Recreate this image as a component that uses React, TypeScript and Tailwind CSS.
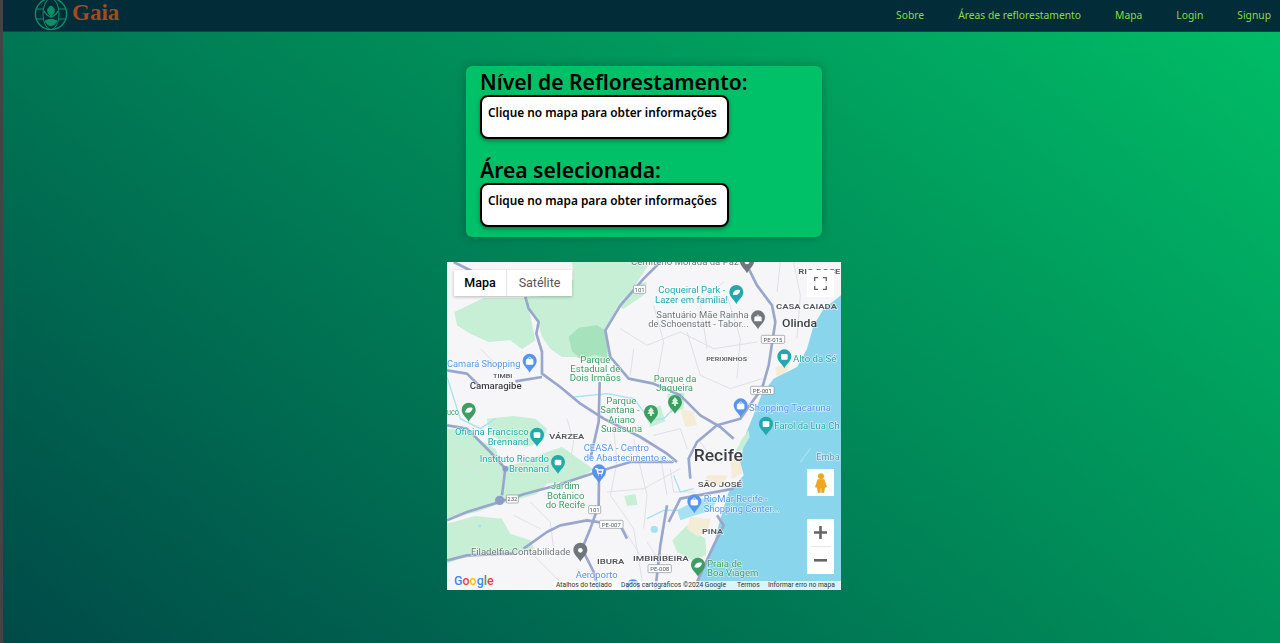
import React from "react";

const UI = "'Noto Sans','Open Sans',sans-serif";

/* The map drawing uses a 3x coordinate space: viewBox 1182 x 984 rendered at 394 x 328 */
const greens: [string, string][] = [
  ["M375 0 L610 0 L565 70 L520 120 L480 190 L470 205 L490 290 L440 300 L385 285 L345 285 L310 260 L285 225 L272 180 L245 140 L235 105 L330 100 L380 50 Z", "#c7efd6"],
  ["M22 150 L110 108 L235 108 L250 160 L265 235 L225 262 L190 235 L125 240 L70 215 L30 190 Z", "#c7efd6"],
  ["M365 225 L395 197 L450 190 L475 205 L482 270 L478 288 L445 278 L400 290 L375 268 Z", "#a6e2bb"],
  ["M0 500 L60 500 L100 535 L145 560 L170 615 L230 600 L300 570 L345 555 L395 590 L440 622 L385 655 L300 665 L270 695 L215 712 L150 728 L90 750 L45 760 L0 770 Z", "#c7efd6"],
  ["M120 470 L200 462 L265 470 L300 500 L290 535 L240 555 L170 540 L125 515 Z", "#c7efd6"],
  ["M0 785 L85 762 L165 770 L190 815 L250 835 L262 860 L205 875 L100 880 L40 890 L0 905 Z", "#c7efd6"],
  ["M590 450 L640 430 L655 478 L610 495 Z", "#c7efd6"],
  ["M660 395 L712 392 L710 440 L672 452 Z", "#c7efd6"],
  ["M532 702 L565 696 L572 728 L540 732 Z", "#c7efd6"],
  ["M676 835 L720 790 L775 830 L778 880 L735 895 L690 870 Z", "#c7efd6"],
  ["M510 135 L560 70 L600 60 L590 100 L530 140 Z", "#c7efd6"],
];

const beige: string[] = [
  "M700 440 L740 450 L750 490 L715 495 Z",
  "M850 590 L882 590 L885 635 L855 650 Z",
  "M985 315 L1030 305 L1010 350 L990 345 Z",
  "M730 765 L790 770 L785 800 L755 825 L720 800 Z",
  "M780 640 L840 640 L830 670 L775 665 Z",
];

const water =
  "M1182 100 L1130 140 L1100 190 L1080 260 L1050 315 L980 350 L945 395 L915 470 L895 520 L880 600 L890 640 L845 690 L820 770 L800 850 L770 920 L740 984 L1182 984 Z";

const major = [
  "M235 105 L245 140 L275 180 L268 215 L285 270 L285 335 L340 375 L400 425 L470 470 L580 525 L660 575 L690 600",
  "M0 325 L60 335 L100 375",
  "M205 358 L285 345",
  "M640 0 L590 50 L520 130 L475 205 L490 285 L545 350 L620 365 L700 400 L760 460 L820 495 L860 530",
  "M900 10 L930 70 L975 130 L985 180 L965 310 L945 380 L915 420 L880 470 L810 490 L750 540 L725 590 L730 650",
  "M0 775 L60 750 L150 722 L235 695 L330 670 L450 630 L550 600 L680 600",
  "M456 640 L455 730 L430 800 L405 860 L440 930 L455 984",
  "M230 860 L300 810 L340 790 L420 775 L520 790 L540 830",
  "M60 500 L130 570 L175 620 L165 700",
  "M0 895 L60 880 L200 875",
  "M660 730 L640 850 L625 984",
  "M860 680 L700 710 L665 780",
  "M810 760 L830 790 L800 850 L750 960",
  "M458 360 L455 480 L430 590",
  "M20 0 L80 30",
  "M0 490 L60 500",
];

const minor = [
  "M520 200 L600 250 L700 210 L800 260 L930 240",
  "M560 260 L550 340",
  "M620 130 L650 240 L630 350",
  "M720 210 L760 340 L850 380 L945 350",
  "M780 260 L760 120 L830 60",
  "M840 100 L880 230 L870 350",
  "M500 500 L510 600 L490 700 L560 800 L590 984",
  "M560 530 L600 700 L590 800",
  "M640 580 L660 700",
  "M700 620 L590 680 L480 690",
  "M360 470 L380 540 L360 650",
  "M200 760 L280 800",
  "M530 800 L580 880 L700 880",
  "M620 520 L700 500 L720 560",
  "M30 590 L110 640",
  "M250 720 L310 780 L320 860",
  "M260 880 L340 960 L400 984",
  "M1040 0 L1060 100 L1050 230",
  "M1000 0 L990 90",
  "M600 840 L640 900",
  "M760 540 L800 600 L840 560",
  "M670 620 L680 690 L745 690",
  "M100 260 L170 330",
];

const rivers = [
  "M380 405 L480 395 L560 410 L610 475 L650 470 L680 440",
  "M0 345 L40 470 L100 500 L145 470",
  "M680 640 L700 690 L740 680",
  "M600 770 L650 745 L700 745",
  "M1090 560 L1060 600",
];

type Lbl = [number, number, number, string, string, number?, number?];

const teal = "#21a9ac",
  blue = "#5795ec",
  green = "#3d9e63",
  gray = "#70767c",
  dark = "#3b3e42",
  muted = "#55595e";

const labels: Lbl[] = [
  [552, 875, 8, "Cemitério Morada da Paz", gray],
  [1054, 1180, 36, "RIO DOCE", muted, 20, 600],
  [634, 835, 94, "Coqueiral Park -", teal],
  [624, 843, 122, "Lazer em família!", teal],
  [628, 905, 168, "Santuário Mãe Rainha", gray],
  [604, 905, 196, "de Schoenstatt - Tabor...", gray],
  [987, 1170, 140, "CASA CAIADA", muted, 20, 600],
  [1005, 1110, 196, "Olinda", dark, 34, 500],
  [778, 900, 298, "PERIXINHOS", muted, 17, 600],
  [1038, 1168, 300, "Alto da Sé", teal],
  [0, 220, 315, "Camará Shopping", blue],
  [138, 196, 349, "TIMBI", muted, 16, 600],
  [68, 224, 382, "Camaragibe", dark, 26, 500],
  [400, 490, 302, "Parque", green],
  [370, 520, 330, "Estadual de", green],
  [368, 522, 358, "Dois Irmãos", green],
  [620, 748, 359, "Parque da", green],
  [628, 738, 388, "Jaqueira", green],
  [478, 568, 425, "Parque", green],
  [460, 578, 453, "Santana -", green],
  [484, 564, 483, "Ariano", green],
  [462, 585, 511, "Suassuna", green],
  [0, 36, 460, "uco", green],
  [24, 245, 519, "Oficina Francisco", teal],
  [122, 244, 548, "Brennand", teal],
  [307, 412, 532, "VÁRZEA", muted, 20, 600],
  [98, 306, 601, "Instituto Ricardo", teal],
  [186, 306, 630, "Brennand", teal],
  [410, 606, 567, "CEASA - Centro", blue],
  [410, 680, 596, "de Abastecimento e...", blue],
  [312, 398, 682, "Jardim", green],
  [300, 412, 710, "Botânico", green],
  [296, 414, 739, "do Recife", green],
  [740, 888, 598, "Recife", dark, 48, 500],
  [752, 885, 674, "SÃO JOSÉ", muted, 20, 600],
  [770, 962, 720, "RioMar Recife -", blue],
  [770, 998, 749, "Shopping Center...", blue],
  [765, 828, 815, "PINA", muted, 20, 600],
  [558, 725, 897, "IMBIRIBEIRA", muted, 20, 600],
  [450, 532, 907, "IBURA", muted, 20, 600],
  [780, 885, 914, "Praia de", green],
  [780, 934, 943, "Boa Viagem", green],
  [72, 370, 880, "Filadelfia Contabilidade", gray],
  [386, 512, 948, "Aeroporto", blue],
  [906, 1152, 446, "Shopping Tacaruna", blue],
  [982, 1178, 500, "Farol da Lua Ch", teal],
  [1108, 1178, 593, "Emba", "#5f9db2"],
];

type PinKind = "bag" | "box" | "tree" | "dot" | "church" | "cart" | "leaf";

const pins: [number, number, string, PinKind][] = [
  [900, 0, gray, "dot"],
  [868, 92, teal, "leaf"],
  [933, 168, gray, "church"],
  [1012, 285, teal, "box"],
  [248, 298, blue, "bag"],
  [65, 445, green, "leaf"],
  [270, 520, teal, "box"],
  [333, 602, teal, "box"],
  [456, 630, blue, "cart"],
  [612, 452, green, "tree"],
  [684, 422, green, "tree"],
  [881, 432, blue, "bag"],
  [957, 487, teal, "box"],
  [742, 720, blue, "bag"],
  [753, 910, green, "leaf"],
  [400, 865, gray, "dot"],
  [558, 975, blue, "bag"],
];

const shields: [number, number, string][] = [
  [578, 82, "101"],
  [978, 232, "PE-015"],
  [946, 385, "PE-001"],
  [196, 711, "232"],
  [443, 743, "101"],
  [493, 787, "PE-007"],
  [638, 920, "PE-008"],
];

function PinGlyph({ k }: { k: PinKind }) {
  if (k === "tree") return <path d="M0 -17 L9 -5 H5 L11 4 H3 V10 H-3 V4 H-11 L-5 -5 H-9 Z" fill="#d9f2e0" />;
  if (k === "dot") return <circle r="7" fill="#fff" />;
  if (k === "bag")
    return (
      <g fill="none" stroke="#fff" strokeWidth="2.5">
        <rect x="-10" y="-6" width="20" height="15" rx="2" fill="#fff" />
        <path d="M-5 -6 C-5 -14 5 -14 5 -6" />
      </g>
    );
  if (k === "cart") return <path d="M-12 -10 H-6 L-3 4 H9 L12 -6 H-5 M-2 9 h2 M6 9 h2" fill="none" stroke="#fff" strokeWidth="4" />;
  if (k === "church") return <path d="M-11 10 V-2 L-5 -7 L-3 -2 L0 -13 L3 -2 L5 -7 L11 -2 V10 Z" fill="#fff" />;
  if (k === "leaf") return <path d="M-11 6 C-9 -7 2 -11 12 -7 C10 5 1 10 -11 6 Z" fill="#fff" />;
  return <rect x="-10" y="-9" width="20" height="17" rx="3" fill="#fff" />;
}

function Pin({ x, y, c, k }: { x: number; y: number; c: string; k: PinKind }) {
  return (
    <g transform={`translate(${x} ${y})`}>
      <path d="M0 34 C-5 22 -21 13 -21 -2 A21 21 0 1 1 21 -2 C21 13 5 22 0 34 Z" fill={c} />
      <PinGlyph k={k} />
    </g>
  );
}

function GoogleWord() {
  const l: [string, string][] = [
    ["G", "#4285f4"],
    ["o", "#ea4335"],
    ["o", "#fbbc05"],
    ["g", "#4285f4"],
    ["l", "#34a853"],
    ["e", "#ea4335"],
  ];
  return (
    <span className="absolute left-[7px] bottom-[1px] text-[12.5px] leading-[16px] font-medium [text-shadow:0_0_2px_#fff]">
      {l.map(([t, c], i) => (
        <span key={i} style={{ color: c }}>
          {t}
        </span>
      ))}
    </span>
  );
}

function MapView() {
  return (
    <div className="relative w-[394px] h-[328px] overflow-hidden bg-[#f6f6f8] [font-family:Roboto,sans-serif]">
      <svg width="394" height="328" viewBox="0 0 1182 984" className="block blur-[0.3px]">
        <rect width="1182" height="984" fill="#f6f6f8" />
        {greens.map(([d, c], i) => (
          <path key={i} d={d} fill={c} />
        ))}
        {beige.map((d, i) => (
          <path key={i} d={d} fill="#f5ecd8" />
        ))}
        {minor.map((d, i) => (
          <path key={i} d={d} fill="none" stroke="#dfe1e8" strokeWidth="3" />
        ))}
        <path d={water} fill="#88d5ec" />
        <path d="M690 745 L755 712 L812 705 L795 745 L745 760 L700 775 Z" fill="#a6e2f1" />
        <circle cx="622" cy="802" r="11" fill="#a6e2f1" />
        <circle cx="98" cy="792" r="5" fill="#a6e2f1" />
        <path d="M905 505 L885 530 L865 570 L885 565 L908 525 Z" fill="#c7efd6" />
        {rivers.map((d, i) => (
          <path key={i} d={d} fill="none" stroke="#a6e2f1" strokeWidth="4" />
        ))}
        {major.map((d, i) => (
          <path key={i} d={d} fill="none" stroke="#99a7cc" strokeWidth="8" strokeLinejoin="round" />
        ))}
        <circle cx="158" cy="715" r="14" fill="#8f9cc6" />
        <circle cx="175" cy="620" r="9" fill="#8f9cc6" />
        {labels.map(([x1, x2, y, t, c, s, w], i) => (
          <text
            key={i}
            x={x1}
            y={y}
            fill={c}
            fontSize={s ?? 29}
            fontWeight={w ?? 400}
            textLength={x2 - x1}
            lengthAdjust="spacingAndGlyphs"
            stroke="#ffffff"
            strokeWidth="4"
            strokeOpacity="0.6"
            paintOrder="stroke"
          >
            {t}
          </text>
        ))}
        {pins.map(([x, y, c, k], i) => (
          <Pin key={i} x={x} y={y} c={c} k={k} />
        ))}
        {shields.map(([x, y, t], i) => {
          const w = t.length > 3 ? 70 : 36;
          return (
            <g key={i}>
              <rect x={x - w / 2} y={y - 12} width={w} height={24} rx="3" fill="#fff" stroke="#8a8f96" strokeWidth="2" />
              <text x={x} y={y + 7} fontSize="18" fill="#55595f" textAnchor="middle">
                {t}
              </text>
            </g>
          );
        })}
      </svg>

      <div className="absolute left-[7px] top-[8px] flex h-[26px] bg-white shadow-[0_1px_3px_rgba(0,0,0,0.25)] text-[12.5px]">
        <div className="w-[53px] flex items-center justify-center text-black font-medium border-r border-[#e6e6e6]">Mapa</div>
        <div className="w-[65px] flex items-center justify-center text-[#565656]">Satélite</div>
      </div>

      <div className="absolute left-[360px] top-[8px] w-[27px] h-[27px] bg-white flex items-center justify-center">
        <svg width="13" height="13" viewBox="0 0 13 13" fill="none" stroke="#666" strokeWidth="1.3">
          <path d="M0.7 4V0.7H4M9 0.7H12.3V4M12.3 9V12.3H9M4 12.3H0.7V9" />
        </svg>
      </div>

      <div className="absolute left-[360px] top-[207px] w-[27px] h-[27px] bg-white flex items-center justify-center">
        <svg width="12" height="20" viewBox="0 0 12 20">
          <circle cx="6" cy="3.2" r="3" fill="#f2a71b" />
          <path d="M2.8 6.5 H9.2 L11.6 14 L9.6 14.5 L9 19.5 H6.6 V15 H5.4 V19.5 H3 L2.4 14.5 L0.4 14 Z" fill="#f2a71b" stroke="#c98a12" strokeWidth="0.4" />
        </svg>
      </div>

      <div className="absolute left-[360px] top-[257px] w-[27px] h-[55px] bg-white flex flex-col items-center">
        <div className="h-[27px] w-full flex items-center justify-center">
          <svg width="13" height="13" viewBox="0 0 13 13" fill="#666">
            <path d="M5.2 0H7.8V5.2H13V7.8H7.8V13H5.2V7.8H0V5.2H5.2Z" />
          </svg>
        </div>
        <div className="w-[20px] h-px bg-[#e6e6e6]" />
        <div className="h-[27px] w-full flex items-center justify-center">
          <svg width="13" height="3" viewBox="0 0 13 3" fill="#666">
            <rect width="13" height="2.6" />
          </svg>
        </div>
      </div>

      <GoogleWord />

      <div className="absolute right-0 bottom-0 h-[9px] flex items-center text-[6.7px] leading-[9px] text-[#333] bg-white/70 whitespace-nowrap">
        <span className="pl-[3px] w-[68px]">Atalhos do teclado</span>
        <span className="w-[116px]">Dados cartográficos ©2024 Google</span>
        <span className="w-[31px]">Termos</span>
        <span className="w-[73px]">Informar erro no mapa</span>
      </div>
    </div>
  );
}

function Logo() {
  const c = "#0b8f68";
  return (
    <svg width="34" height="34" viewBox="0 0 34 34" fill="none" stroke={c} strokeWidth="1" className="-mt-[4px] shrink-0">
      <circle cx="17" cy="17" r="15.6" strokeWidth="1.4" />
      <ellipse cx="17" cy="17" rx="8" ry="15.6" />
      <path d="M2 12H10M24 12H32M2 22H10M24 22H32" />
      <path d="M17 9 C13 11 12 15 17 19 C22 15 21 11 17 9 Z" fill={c} />
      <path d="M10 14 C12 18 14 19 17 20 C20 19 22 18 24 14" strokeWidth="1.5" />
      <path d="M11 24 C13 28 15 28 17 29 C19 28 21 28 23 24 C20 22 14 22 11 24 Z" fill={c} />
    </svg>
  );
}

function InfoBlock({ title }: { title: string }) {
  return (
    <div>
      <h2 className="text-[21.1px] leading-[26px] font-semibold text-black whitespace-nowrap">{title}</h2>
      <div className="w-[249px] h-[44px] bg-white border-2 border-black rounded-[8px] px-[6px] pt-[6px] text-[11.85px] leading-[18px] font-semibold text-black whitespace-nowrap shadow-[0_2px_4px_rgba(0,0,0,0.35)]">
        Clique no mapa para obter informações
      </div>
    </div>
  );
}

export default function App() {
  return (
    <div className="flex h-[643px] w-[1280px] overflow-hidden" style={{ fontFamily: UI }}>
      <div className="w-[3px] shrink-0 bg-[#444444]" />
      <div className="flex-1 flex flex-col bg-[linear-gradient(37deg,#004a48,#00bf66)]">
        <nav className="h-[32px] shrink-0 flex items-center justify-between bg-[#022c38] border-b border-[#034a4a] overflow-hidden pl-[31px] pr-[9px]">
          <div className="flex items-center gap-[4px]">
            <Logo />
            <span className="text-[23px] leading-[30px] font-bold text-[#a44a1c] -mt-[5px] [font-family:'Liberation_Serif',serif]">Gaia</span>
          </div>
          <div className="flex items-center gap-[34px] text-[10.3px] text-[#86dc40]">
            <span>Sobre</span>
            <span>Áreas de reflorestamento</span>
            <span>Mapa</span>
            <span>Login</span>
            <span>Signup</span>
          </div>
        </nav>

        <main className="flex flex-col items-center pl-[5px]">
          <section className="mt-[34px] w-[356px] h-[171px] bg-[#00c068] rounded-[6px] pl-[14px] pt-[3px] flex flex-col gap-[18px] shadow-[0_0_10px_rgba(0,0,0,0.25)]">
            <InfoBlock title="Nível de Reflorestamento:" />
            <InfoBlock title="Área selecionada:" />
          </section>
          <div className="mt-[25px]">
            <MapView />
          </div>
        </main>
      </div>
    </div>
  );
}
